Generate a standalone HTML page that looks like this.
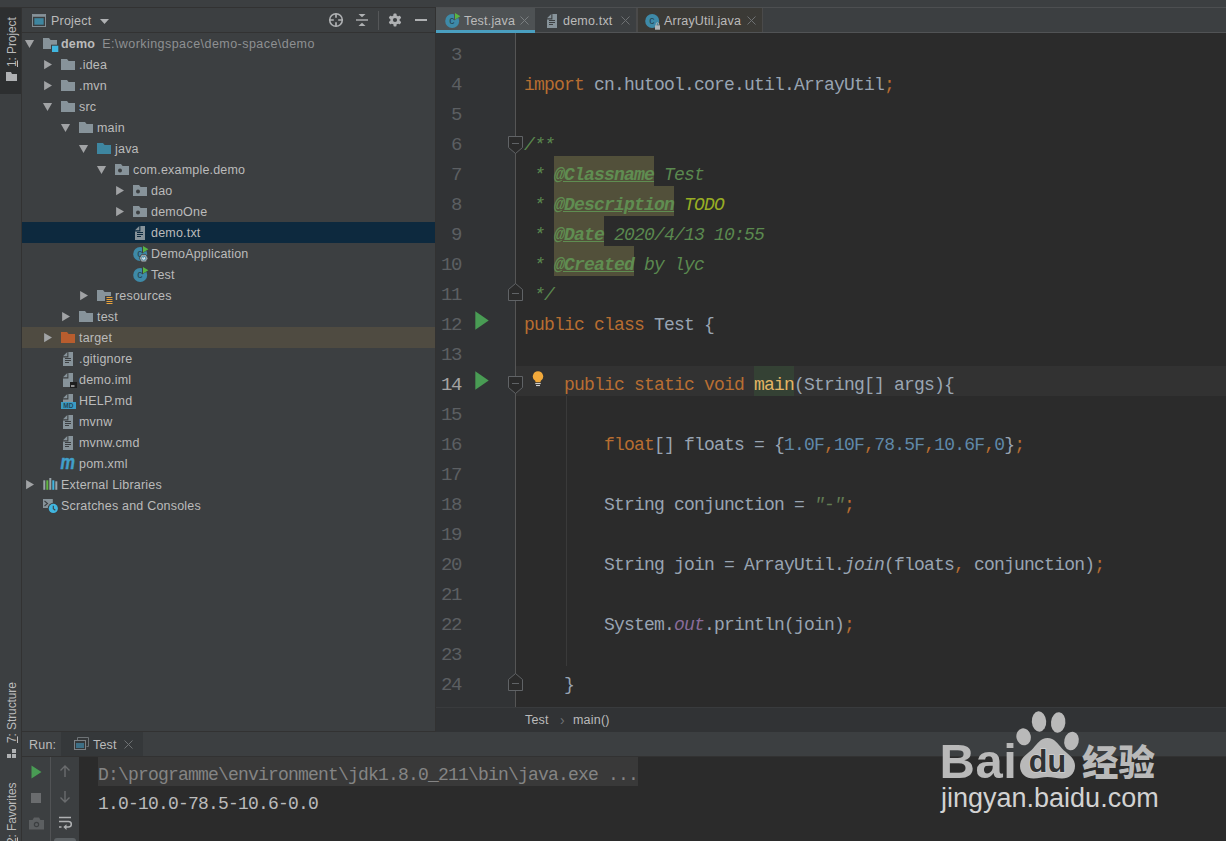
<!DOCTYPE html>
<html><head><meta charset="utf-8"><title>demo</title>
<style>
*{box-sizing:border-box}
html,body{margin:0;padding:0}
body{width:1226px;height:841px;overflow:hidden;position:relative;background:#3c3f41;font-family:"Liberation Sans","Noto Sans CJK SC",sans-serif;font-size:12.5px;letter-spacing:.2px;color:#bbbbbb}
.abs{position:absolute}
#topline{left:0;top:7px;width:1226px;height:1px;background:#323232}
#stripe{left:0;top:8px;width:22px;height:833px;background:#3c3f41;border-right:1px solid #323232}
#stripe .act{position:absolute;left:0;top:0;width:21px;height:86px;background:#2d2f30}
.vt{position:absolute;white-space:nowrap;transform-origin:0 0;transform:rotate(-90deg);font-size:12px;letter-spacing:-.1px;color:#bbbbbb}
#side{left:22px;top:8px;width:414px;height:723px;background:#3c3f41;border-right:1px solid #323232}
#sidehead{left:22px;top:8px;width:413px;height:25px;border-bottom:1px solid #323232}
.row{position:absolute;left:22px;width:413px;height:21px;line-height:21px;white-space:nowrap}
.row.sel{background:#0d293e}
.row.excl{background:#4f4b41}
.row span{position:absolute;top:0}
.row .arw{top:5px;height:11px;line-height:0}
.row .icw{top:3px;height:16px;line-height:0}
.row .lbl{top:1px}
.row b{font-weight:bold;color:#bbbbbb;position:static}
.row .loc{position:static;color:#8e9092;margin-left:7px;letter-spacing:.45px}
.pomm{font-family:"Liberation Sans",sans-serif;font-weight:bold;font-style:italic;font-size:17px;color:#3e9ac4;line-height:14px;position:static!important;display:inline-block;transform:translate(-3px,-3px)}
#tabs{left:436px;top:7px;width:790px;height:26px;background:#3c3f41;border-bottom:1px solid #515355;border-top:1px solid #4d4f51}
.tab{position:absolute;top:8px;height:25px;line-height:26px;white-space:nowrap;color:#bbbbbb}
#editor{left:436px;top:33px;width:790px;height:674px;background:#2b2b2b;overflow:hidden}
#gutter{left:0;top:0;width:80px;height:675px;background:#313335;border-right:1px solid #555555}
.mono{font-family:"Liberation Mono",monospace}
.ln{position:absolute;left:0;width:25px;text-align:right;height:30px;line-height:32px;font-family:"Liberation Mono",monospace;font-size:19px;letter-spacing:-1.4px;color:#5c5f62;transform:translateY(-33px)}
.ln.cur{color:#a4a3a3}
.cl{position:absolute;left:88px;height:30px;line-height:32px;white-space:pre;font-family:"Liberation Mono",monospace;font-size:18px;letter-spacing:-0.8px;color:#a9b7c6;opacity:.87;transform:translateY(-33px)}
.k{color:#cc7832} .dc{color:#629755;font-style:italic} .dt{color:#629755;font-style:italic;font-weight:bold;text-decoration:underline}
.todo{color:#a8c023;font-style:italic} .n{color:#6897bb} .s{color:#6a8759;font-style:italic} .i{font-style:italic} .fld{color:#9876aa;font-style:italic}
.fn{color:#ffc66d}
#curline{left:80px;top:333px;width:710px;height:30px;background:#323232}
#crumbs{left:436px;top:707px;width:790px;height:25px;background:#313335;border-top:1px solid #393b3d;line-height:24px;color:#bbbbbb}
#runhead{left:22px;top:731px;width:1204px;height:26px;background:#3c3f41;border-top:1px solid #323232;border-bottom:1px solid #323232}
#runhead2{left:436px;top:731px;width:790px;height:1px;background:#313335}
#runtab{left:39px;top:0;width:82px;height:24px;background:#35383a}
#runtools{left:22px;top:757px;width:57px;height:84px;background:#3c3f41}
#console{left:79px;top:757px;width:1147px;height:84px;background:#2b2b2b}
.con{position:absolute;left:19px;height:26px;line-height:28px;white-space:pre;font-family:"Liberation Mono",monospace;font-size:18px;letter-spacing:-0.8px}
</style></head><body>
<div class="abs" id="topline"></div>
<div class="abs" id="stripe"><div class="act"></div>
<span class="vt" style="left:5px;top:59px"><u>1</u>: Project</span>
<svg class="abs" style="left:6px;top:64px" width="11" height="9" viewBox="0 0 11 9"><path d="M0 0h5l1 2h5v7H0z" fill="#afb1b3"/></svg>
<span class="vt" style="left:5px;top:735px"><u>7</u>: Structure</span>
<span class="vt" style="left:5px;top:836px"><u>2</u>: Favorites</span>
<svg class="abs" style="left:7px;top:739px" width="12" height="12" viewBox="0 0 12 12"><rect x="0" y="7" width="4" height="4" fill="#afb1b3"/><rect x="5" y="7" width="4" height="4" fill="#afb1b3"/><rect x="5" y="2" width="4" height="4" fill="#afb1b3"/></svg>
</div>
<div class="abs" id="side"></div>
<div class="abs" id="sidehead">
<svg class="abs" style="left:10px;top:6px" width="14" height="13" viewBox="0 0 15 14" preserveAspectRatio="none"><rect x=".5" y=".5" width="14" height="13" fill="#3c3f41" stroke="#87939a"/><rect x="1" y="1" width="13" height="2" fill="#87939a"/><rect x="2.500" y="4.500" width="10" height="7" fill="#3e86a0"/></svg>
<span class="abs" style="left:29px;top:1px;line-height:25px;font-size:12.5px">Project</span>
<svg class="abs" style="left:78px;top:11px" width="9" height="6" viewBox="0 0 9 6"><path d="M0 0h9l-4.500 5z" fill="#afb1b3"/></svg>
<svg class="abs" style="left:306px;top:4px" width="16" height="16" viewBox="0 0 16 16"><circle cx="8" cy="8" r="6.300" fill="none" stroke="#afb1b3" stroke-width="1.600"/><path d="M8 1.500v4.300M8 10.200v4.300M1.500 8h4.300M10.200 8h4.300" stroke="#afb1b3" stroke-width="1.700"/></svg>
<svg class="abs" style="left:332px;top:4px" width="16" height="16" viewBox="0 0 16 16"><path d="M2 8h12" stroke="#afb1b3" stroke-width="1.400"/><path d="M4.500 2h7l-3.500 3.300z" fill="#afb1b3"/><path d="M4.500 14h7l-3.500-3.300z" fill="#afb1b3"/></svg>
<div class="abs" style="left:356px;top:3px;width:1px;height:19px;background:#555759"></div>
<svg class="abs" style="left:365px;top:4px" width="16" height="16" viewBox="0 0 16 16"><g fill="#afb1b3"><circle cx="8" cy="8" r="4.700"/><rect x="6.500" y="1.500" width="3" height="13" rx=".8"/><rect x="6.500" y="1.500" width="3" height="13" rx=".8" transform="rotate(60 8 8)"/><rect x="6.500" y="1.500" width="3" height="13" rx=".8" transform="rotate(120 8 8)"/></g><circle cx="8" cy="8" r="2.100" fill="#3c3f41"/></svg>
<div class="abs" style="left:393px;top:11px;width:12px;height:2px;background:#afb1b3"></div>
</div>
<div class="row " style="top:33px"><span class="arw" style="left:2px"><svg class="ar" width="11" height="11" viewBox="0 0 11 11"><path d="M.9 1.900h9.200l-4.600 8.100z" fill="#a1a3a5"/></svg></span><span class="icw" style="left:21px"><svg class="ic" width="16" height="16" viewBox="0 0 16 16"><path d="M0 2h6l1.6 2H14v9H0z" fill="#87939a"/><rect x="8" y="8.700" width="8" height="8" fill="#3c3f41"/><rect x="9" y="9.700" width="6.300" height="6.300" fill="#40b6e0"/></svg></span><span class="lbl" style="left:39px"><b>demo</b><span class="loc">E:\workingspace\demo-space\demo</span></span></div>
<div class="row " style="top:54px"><span class="arw" style="left:20px"><svg class="ar" width="11" height="11" viewBox="0 0 11 11"><path d="M2.100 1l7.900 4.600-7.900 4.600z" fill="#a1a3a5"/></svg></span><span class="icw" style="left:39px"><svg class="ic" width="16" height="16" viewBox="0 0 16 16"><path d="M0 2h6l1.6 2H14v9H0z" fill="#87939a"/></svg></span><span class="lbl" style="left:57px">.idea</span></div>
<div class="row " style="top:75px"><span class="arw" style="left:20px"><svg class="ar" width="11" height="11" viewBox="0 0 11 11"><path d="M2.100 1l7.900 4.600-7.900 4.600z" fill="#a1a3a5"/></svg></span><span class="icw" style="left:39px"><svg class="ic" width="16" height="16" viewBox="0 0 16 16"><path d="M0 2h6l1.6 2H14v9H0z" fill="#87939a"/></svg></span><span class="lbl" style="left:57px">.mvn</span></div>
<div class="row " style="top:96px"><span class="arw" style="left:20px"><svg class="ar" width="11" height="11" viewBox="0 0 11 11"><path d="M.9 1.900h9.200l-4.600 8.100z" fill="#a1a3a5"/></svg></span><span class="icw" style="left:39px"><svg class="ic" width="16" height="16" viewBox="0 0 16 16"><path d="M0 2h6l1.6 2H14v9H0z" fill="#87939a"/></svg></span><span class="lbl" style="left:57px">src</span></div>
<div class="row " style="top:117px"><span class="arw" style="left:38px"><svg class="ar" width="11" height="11" viewBox="0 0 11 11"><path d="M.9 1.900h9.200l-4.600 8.100z" fill="#a1a3a5"/></svg></span><span class="icw" style="left:57px"><svg class="ic" width="16" height="16" viewBox="0 0 16 16"><path d="M0 2h6l1.6 2H14v9H0z" fill="#87939a"/></svg></span><span class="lbl" style="left:75px">main</span></div>
<div class="row " style="top:138px"><span class="arw" style="left:56px"><svg class="ar" width="11" height="11" viewBox="0 0 11 11"><path d="M.9 1.900h9.200l-4.600 8.100z" fill="#a1a3a5"/></svg></span><span class="icw" style="left:75px"><svg class="ic" width="16" height="16" viewBox="0 0 16 16"><path d="M0 2h6l1.6 2H14v9H0z" fill="#3e86a0"/></svg></span><span class="lbl" style="left:93px">java</span></div>
<div class="row " style="top:159px"><span class="arw" style="left:74px"><svg class="ar" width="11" height="11" viewBox="0 0 11 11"><path d="M.9 1.900h9.200l-4.600 8.100z" fill="#a1a3a5"/></svg></span><span class="icw" style="left:93px"><svg class="ic" width="16" height="16" viewBox="0 0 16 16"><path d="M0 2h6l1.6 2H14v9H0z" fill="#87939a"/><circle cx="5" cy="8.5" r="2" fill="#3c3f41"/></svg></span><span class="lbl" style="left:111px">com.example.demo</span></div>
<div class="row " style="top:180px"><span class="arw" style="left:92px"><svg class="ar" width="11" height="11" viewBox="0 0 11 11"><path d="M2.100 1l7.900 4.600-7.900 4.600z" fill="#a1a3a5"/></svg></span><span class="icw" style="left:111px"><svg class="ic" width="16" height="16" viewBox="0 0 16 16"><path d="M0 2h6l1.6 2H14v9H0z" fill="#87939a"/><circle cx="5" cy="8.5" r="2" fill="#3c3f41"/></svg></span><span class="lbl" style="left:129px">dao</span></div>
<div class="row " style="top:201px"><span class="arw" style="left:92px"><svg class="ar" width="11" height="11" viewBox="0 0 11 11"><path d="M2.100 1l7.900 4.600-7.900 4.600z" fill="#a1a3a5"/></svg></span><span class="icw" style="left:111px"><svg class="ic" width="16" height="16" viewBox="0 0 16 16"><path d="M0 2h6l1.6 2H14v9H0z" fill="#87939a"/><circle cx="5" cy="8.5" r="2" fill="#3c3f41"/></svg></span><span class="lbl" style="left:129px">demoOne</span></div>
<div class="row sel" style="top:222px"><span class="icw" style="left:111px"><svg class="ic" width="16" height="16" viewBox="0 0 16 16"><path d="M7.400 1H12v14H2V6.400h5.400z" fill="#87939a"/><path d="M6.300 1v4.300H2z" fill="#87939a"/><path d="M4 7.5h6M4 9.5h6M4 11.5h4" stroke="#0d293e" stroke-width="1"/></svg></span><span class="lbl" style="left:129px">demo.txt</span></div>
<div class="row " style="top:243px"><span class="icw" style="left:111px"><svg class="ic" width="16" height="16" viewBox="0 0 16 16"><circle cx="7.2" cy="8" r="7" fill="#3e8aa8"/><text x="7" y="11" text-anchor="middle" font-family="Liberation Sans, sans-serif" font-size="10.500" fill="#23424f">c</text><path d="M9 -1v8.500l7-4.200z" fill="#3c3f41"/><path d="M10 0v6.600l5.400-3.300z" fill="#59b543"/><path d="M8.500 8.400h4.400l2.200 3.800-2.200 3.800h-4.400l-2.200-3.800z" fill="#9da4a8" stroke="#3c3f41" stroke-width=".8"/><circle cx="10.700" cy="12.200" r="2" fill="#e8ecee" stroke="#3e8aa8" stroke-width=".9"/><path d="M10.700 10.500v1.800" stroke="#3e8aa8" stroke-width=".9"/></svg></span><span class="lbl" style="left:129px">DemoApplication</span></div>
<div class="row " style="top:264px"><span class="icw" style="left:111px"><svg class="ic" width="16" height="16" viewBox="0 0 16 16"><circle cx="7.2" cy="8" r="7" fill="#3e8aa8"/><text x="7" y="11" text-anchor="middle" font-family="Liberation Sans, sans-serif" font-size="10.500" fill="#23424f">c</text><path d="M9 -1v8.500l7-4.200z" fill="#3c3f41"/><path d="M10 0v6.600l5.400-3.300z" fill="#59b543"/></svg></span><span class="lbl" style="left:129px">Test</span></div>
<div class="row " style="top:285px"><span class="arw" style="left:56px"><svg class="ar" width="11" height="11" viewBox="0 0 11 11"><path d="M2.100 1l7.900 4.600-7.900 4.600z" fill="#a1a3a5"/></svg></span><span class="icw" style="left:75px"><svg class="ic" width="16" height="16" viewBox="0 0 16 16"><path d="M0 2h6l1.6 2H14v9H0z" fill="#87939a"/><rect x="8" y="8" width="8" height="8" fill="#3c3f41"/><path d="M9.500 9.500h6M9.500 11.500h6M9.500 13.500h6M9.500 15.500h6" stroke="#e8a33d" stroke-width="1"/></svg></span><span class="lbl" style="left:93px">resources</span></div>
<div class="row " style="top:306px"><span class="arw" style="left:38px"><svg class="ar" width="11" height="11" viewBox="0 0 11 11"><path d="M2.100 1l7.900 4.600-7.900 4.600z" fill="#a1a3a5"/></svg></span><span class="icw" style="left:57px"><svg class="ic" width="16" height="16" viewBox="0 0 16 16"><path d="M0 2h6l1.6 2H14v9H0z" fill="#87939a"/></svg></span><span class="lbl" style="left:75px">test</span></div>
<div class="row excl" style="top:327px"><span class="arw" style="left:20px"><svg class="ar" width="11" height="11" viewBox="0 0 11 11"><path d="M2.100 1l7.900 4.600-7.900 4.600z" fill="#a1a3a5"/></svg></span><span class="icw" style="left:39px"><svg class="ic" width="16" height="16" viewBox="0 0 16 16"><path d="M0 2h6l1.6 2H14v9H0z" fill="#b85d2e"/></svg></span><span class="lbl" style="left:57px">target</span></div>
<div class="row " style="top:348px"><span class="icw" style="left:39px"><svg class="ic" width="16" height="16" viewBox="0 0 16 16"><path d="M7.400 1H12v14H2V6.400h5.400z" fill="#87939a"/><path d="M6.300 1v4.300H2z" fill="#87939a"/><path d="M4 7.5h6M4 9.5h6M4 11.5h4" stroke="#3c3f41" stroke-width="1"/></svg></span><span class="lbl" style="left:57px">.gitignore</span></div>
<div class="row " style="top:369px"><span class="icw" style="left:39px"><svg class="ic" width="16" height="16" viewBox="0 0 16 16"><path d="M7.400 1H12v14H2V6.400h5.400z" fill="#87939a"/><path d="M6.300 1v4.300H2z" fill="#87939a"/><rect x="9" y="10" width="7" height="6" fill="#1e1e1e"/><rect x="10" y="13.5" width="3.5" height="1" fill="#fff"/></svg></span><span class="lbl" style="left:57px">demo.iml</span></div>
<div class="row " style="top:390px"><span class="icw" style="left:39px"><svg class="ic" width="16" height="16" viewBox="0 0 16 16"><path d="M7.400 1H12v8H2V6.400h5.400z" fill="#87939a"/><path d="M6.300 1v4.300H2z" fill="#87939a"/><rect x="0" y="9" width="15" height="7" fill="#3b9bc4"/><text x="7.500" y="15" text-anchor="middle" font-family="Liberation Sans, sans-serif" font-weight="bold" font-size="6.500" letter-spacing=".3" fill="#24475a">MD</text></svg></span><span class="lbl" style="left:57px">HELP.md</span></div>
<div class="row " style="top:411px"><span class="icw" style="left:39px"><svg class="ic" width="16" height="16" viewBox="0 0 16 16"><path d="M7.400 1H12v14H2V6.400h5.400z" fill="#87939a"/><path d="M6.300 1v4.300H2z" fill="#87939a"/><path d="M4 7.5h6M4 9.5h6M4 11.5h4" stroke="#3c3f41" stroke-width="1"/></svg></span><span class="lbl" style="left:57px">mvnw</span></div>
<div class="row " style="top:432px"><span class="icw" style="left:39px"><svg class="ic" width="16" height="16" viewBox="0 0 16 16"><path d="M7.400 1H12v14H2V6.400h5.400z" fill="#87939a"/><path d="M6.300 1v4.300H2z" fill="#87939a"/><path d="M4 7.5h6M4 9.5h6M4 11.5h4" stroke="#3c3f41" stroke-width="1"/></svg></span><span class="lbl" style="left:57px">mvnw.cmd</span></div>
<div class="row " style="top:453px"><span class="icw" style="left:39px"><svg class="ic" style="overflow:visible" width="16" height="16" viewBox="0 0 16 16"><text x="-.5" y="13.200" transform="scale(.8 1)" font-family="Liberation Sans, sans-serif" font-weight="bold" font-style="italic" font-size="20.300" fill="#419fca" stroke="#419fca" stroke-width=".5">m</text></svg></span><span class="lbl" style="left:57px">pom.xml</span></div>
<div class="row " style="top:474px"><span class="arw" style="left:2px"><svg class="ar" width="11" height="11" viewBox="0 0 11 11"><path d="M2.100 1l7.900 4.600-7.900 4.600z" fill="#a1a3a5"/></svg></span><span class="icw" style="left:21px"><svg class="ic" width="16" height="16" viewBox="0 0 16 16"><rect x=".3" y="3.300" width="2" height="9.500" fill="#9aa4a9"/><rect x="3.300" y="3.300" width="2" height="9.500" fill="#62b543"/><rect x="6.300" y="1" width="2" height="11.800" fill="#9aa4a9"/><rect x="9.300" y="3.300" width="2" height="9.500" fill="#40b6e0"/><rect x="12.300" y="4.300" width="2" height="8.500" fill="#9aa4a9"/></svg></span><span class="lbl" style="left:39px">External Libraries</span></div>
<div class="row " style="top:495px"><span class="icw" style="left:21px"><svg class="ic" width="16" height="16" viewBox="0 0 16 16"><rect x="0" y="1" width="9.800" height="9" fill="#87939a"/><path d="M1.500 3l3 2.500-3 2.500" stroke="#3c3f41" stroke-width="1.100" fill="none"/><circle cx="10.300" cy="10.400" r="5.600" fill="#3c3f41"/><circle cx="10.300" cy="10.400" r="4.600" fill="#40b6e0"/><path d="M10.300 7.700v3l2 1.500" stroke="#3c3f41" stroke-width="1.100" fill="none"/></svg></span><span class="lbl" style="left:39px">Scratches and Consoles</span></div>
<div class="abs" id="tabs"></div>
<div class="tab" style="left:436px;width:99px;background:#4e5254;border-bottom:3px solid #4a9fc0;height:25px"></div>
<div class="tab" style="left:464px">Test.java</div>
<div class="tab" style="left:563px">demo.txt</div>
<div class="tab" style="left:637px;width:126px;background:#3b3a36;border-left:1px solid #4a4a4a;border-right:1px solid #4a4a4a;height:24px"></div>
<div class="abs" style="left:636px;top:8px;width:1px;height:24px;background:#4a4a4a"></div>
<div class="tab" style="left:664px">ArrayUtil.java</div>
<svg class="abs" style="left:520px;top:16px" width="9" height="9" viewBox="0 0 9 9"><path d="M.5.5l8 8M8.500.5l-8 8" stroke="#7a7e80" stroke-width="1"/></svg>
<svg class="abs" style="left:621px;top:16px" width="9" height="9" viewBox="0 0 9 9"><path d="M.5.5l8 8M8.500.5l-8 8" stroke="#6e7173" stroke-width="1"/></svg>
<svg class="abs" style="left:747px;top:16px" width="9" height="9" viewBox="0 0 9 9"><path d="M.5.5l8 8M8.500.5l-8 8" stroke="#6e7173" stroke-width="1"/></svg>
<div class="abs" style="left:445px;top:13px;line-height:0"><svg class="ic" width="16" height="16" viewBox="0 0 16 16"><circle cx="7.2" cy="8" r="7" fill="#3e8aa8"/><text x="7" y="11" text-anchor="middle" font-family="Liberation Sans, sans-serif" font-size="10.500" fill="#23424f">c</text><path d="M9 -1v8.500l7-4.200z" fill="#4e5254"/><path d="M10 0v6.600l5.400-3.300z" fill="#59b543"/></svg></div>
<div class="abs" style="left:545px;top:12.500px;line-height:0"><svg class="ic" width="16" height="16" viewBox="0 0 16 16"><path d="M7.400 1H12v14H2V6.400h5.400z" fill="#87939a"/><path d="M6.300 1v4.300H2z" fill="#87939a"/><path d="M4 7.5h6M4 9.5h6M4 11.5h4" stroke="#3c3f41" stroke-width="1"/></svg></div>
<div class="abs" style="left:645px;top:13px;line-height:0"><svg class="ic" style="overflow:visible" width="16" height="16" viewBox="0 0 16 16"><circle cx="7.2" cy="8" r="7" fill="#3e8aa8"/><text x="7" y="11" text-anchor="middle" font-family="Liberation Sans, sans-serif" font-size="10.500" fill="#23424f">c</text><rect x="10" y="12.300" width="5" height="4.400" fill="#b0b5b8"/><path d="M11.200 12.300v-1.300a1.300 1.300 0 0 1 2.600 0v1.300" stroke="#b0b5b8" stroke-width=".9" fill="none"/></svg></div>
<div class="abs" id="editor">
<div class="abs" id="curline"></div>
<div class="abs" id="gutter"></div>
<div class="abs" style="left:118px;top:123px;width:100px;height:30px;background:#52503a"></div>
<div class="abs" style="left:118px;top:153px;width:120px;height:30px;background:#52503a"></div>
<div class="abs" style="left:118px;top:183px;width:50px;height:30px;background:#52503a"></div>
<div class="abs" style="left:118px;top:213px;width:80px;height:30px;background:#52503a"></div>
<div class="abs" style="left:318px;top:333px;width:40px;height:30px;background:#344134"></div>
<div class="abs" style="left:130px;top:363px;width:1px;height:270px;background:#3a3a3a"></div>
<div class="ln" style="top:39px">3</div>
<div class="ln" style="top:69px">4</div>
<div class="ln" style="top:99px">5</div>
<div class="ln" style="top:129px">6</div>
<div class="ln" style="top:159px">7</div>
<div class="ln" style="top:189px">8</div>
<div class="ln" style="top:219px">9</div>
<div class="ln" style="top:249px">10</div>
<div class="ln" style="top:279px">11</div>
<div class="ln" style="top:309px">12</div>
<div class="ln" style="top:339px">13</div>
<div class="ln cur" style="top:369px">14</div>
<div class="ln" style="top:399px">15</div>
<div class="ln" style="top:429px">16</div>
<div class="ln" style="top:459px">17</div>
<div class="ln" style="top:489px">18</div>
<div class="ln" style="top:519px">19</div>
<div class="ln" style="top:549px">20</div>
<div class="ln" style="top:579px">21</div>
<div class="ln" style="top:609px">22</div>
<div class="ln" style="top:639px">23</div>
<div class="ln" style="top:669px">24</div>
<div class="cl" style="top:69px"><span class="k">import</span> cn.hutool.core.util.ArrayUtil<span class="k">;</span></div>
<div class="cl" style="top:129px"><span class="dc">/**</span></div>
<div class="cl" style="top:159px"><span class="dc"> * </span><span class="dt">@Classname</span><span class="dc"> Test</span></div>
<div class="cl" style="top:189px"><span class="dc"> * </span><span class="dt">@Description</span> <span class="todo">TODO</span></div>
<div class="cl" style="top:219px"><span class="dc"> * </span><span class="dt">@Date</span><span class="dc"> 2020/4/13 10:55</span></div>
<div class="cl" style="top:249px"><span class="dc"> * </span><span class="dt">@Created</span><span class="dc"> by lyc</span></div>
<div class="cl" style="top:279px"><span class="dc"> */</span></div>
<div class="cl" style="top:309px"><span class="k">public class</span> Test {</div>
<div class="cl" style="top:369px">    <span class="k">public static void</span> <span class="fn">main</span>(String[] args){</div>
<div class="cl" style="top:429px">        <span class="k">float</span>[] floats = {<span class="n">1.0F</span><span class="k">,</span><span class="n">10F</span><span class="k">,</span><span class="n">78.5F</span><span class="k">,</span><span class="n">10.6F</span><span class="k">,</span><span class="n">0</span>}<span class="k">;</span></div>
<div class="cl" style="top:489px">        String conjunction = <span class="s">"-"</span><span class="k">;</span></div>
<div class="cl" style="top:549px">        String join = ArrayUtil.<span class="i">join</span>(floats<span class="k">,</span> conjunction)<span class="k">;</span></div>
<div class="cl" style="top:609px">        System.<span class="fld">out</span>.println(join)<span class="k">;</span></div>
<div class="cl" style="top:669px">    }</div>
<div class="abs" style="left:39px;top:278px;line-height:0"><svg width="14" height="19" viewBox="0 0 14 19"><path d="M0.3 0.3l13.4 9.2-13.4 9.2z" fill="#499c54"/></svg></div>
<div class="abs" style="left:39px;top:338px;line-height:0"><svg width="14" height="19" viewBox="0 0 14 19"><path d="M0.3 0.3l13.4 9.2-13.4 9.2z" fill="#499c54"/></svg></div>
<div class="abs" style="left:72px;top:103px;line-height:0"><svg width="15" height="18" viewBox="0 0 15 18"><path d="M0.5 0.5h14v11l-7 6-7-6z" fill="#2b2b2b" stroke="#606366"/><path d="M4 7.5h7" stroke="#606366"/></svg></div>
<div class="abs" style="left:72px;top:250px;line-height:0"><svg width="15" height="18" viewBox="0 0 15 18"><path d="M0.5 17.5h14v-11l-7-6-7 6z" fill="#2b2b2b" stroke="#606366"/><path d="M4 10.5h7" stroke="#606366"/></svg></div>
<div class="abs" style="left:72px;top:343px;line-height:0"><svg width="15" height="18" viewBox="0 0 15 18"><path d="M0.5 0.5h14v11l-7 6-7-6z" fill="#2b2b2b" stroke="#606366"/><path d="M4 7.5h7" stroke="#606366"/></svg></div>
<div class="abs" style="left:72px;top:640px;line-height:0"><svg width="15" height="18" viewBox="0 0 15 18"><path d="M0.5 17.5h14v-11l-7-6-7 6z" fill="#2b2b2b" stroke="#606366"/><path d="M4 10.5h7" stroke="#606366"/></svg></div>
<div class="abs" style="left:96px;top:338px;line-height:0"><svg width="12" height="16" viewBox="0 0 12 16"><path d="M6 0.3a5.200 5.200 0 0 0-2.600 9.700V11.300h5.200V10A5.200 5.200 0 0 0 6 0.300z" fill="#f2a93b"/><rect x="3.300" y="12" width="5.400" height="1.100" fill="#d0d0d0"/><rect x="4" y="14" width="4" height="1.100" fill="#d0d0d0"/></svg></div>
</div>
<div class="abs" id="crumbs"><span class="abs" style="left:89px">Test</span><span class="abs" style="left:124px;color:#6e7274;font-size:14px">›</span><span class="abs" style="left:137px">main()</span></div>
<div class="abs" id="runhead"><div class="abs" id="runtab"></div><span class="abs" style="left:7px;line-height:26px">Run:</span><span class="abs" style="left:71px;line-height:26px">Test</span>
<svg class="abs" style="left:52px;top:5px" width="15" height="14" viewBox="0 0 15 14"><path d="M3.500 3.500v-3h11v9h-2" fill="none" stroke="#6e7376"/><rect x=".5" y="3.500" width="11" height="9" fill="#35383a" stroke="#7d8286"/><rect x="2" y="6" width="8" height="5" fill="#3d6f86"/></svg>
<svg class="abs" style="left:102px;top:8px" width="9" height="9" viewBox="0 0 9 9"><path d="M.5.5l8 8M8.500.5l-8 8" stroke="#6e7173" stroke-width="1"/></svg>
</div>
<div class="abs" id="runhead2"></div>
<div class="abs" id="runtools">
<div class="abs" style="left:28px;top:0;width:1px;height:84px;background:#515355"></div>
<svg class="abs" style="left:9px;top:8px" width="11" height="14" viewBox="0 0 11 14"><path d="M.5.5l10 6.500-10 6.500z" fill="#499c54"/></svg>
<div class="abs" style="left:9px;top:36px;width:10px;height:10px;background:#6a6c6e"></div>
<svg class="abs" style="left:7px;top:60px" width="15" height="13" viewBox="0 0 15 13"><path d="M0 3h3.500l1.500-2.500h5l1.500 2.500h3.500v9.500h-15z" fill="#5c5f61"/><circle cx="7.500" cy="7.500" r="2.700" fill="#3c3f41"/><circle cx="7.500" cy="7.500" r="1.500" fill="#5c5f61"/></svg>
<svg class="abs" style="left:37px;top:7px" width="12" height="14" viewBox="0 0 12 14"><path d="M6 13v-11M1.500 6.500l4.500-4.500 4.500 4.500" stroke="#6a6c6e" stroke-width="1.400" fill="none"/></svg>
<svg class="abs" style="left:37px;top:33px" width="12" height="14" viewBox="0 0 12 14"><path d="M6 1v11M1.500 7.500l4.500 4.500 4.500-4.500" stroke="#6a6c6e" stroke-width="1.400" fill="none"/></svg>
<svg class="abs" style="left:36px;top:59px" width="14" height="15" viewBox="0 0 14 15"><path d="M1 1.500h12M1 5.500h9.500a2.800 2.800 0 0 1 0 5.600h-3.500M1 11h2.500" stroke="#afb1b3" stroke-width="1.500" fill="none"/><path d="M8.500 8.300v5.600l-3.200-2.800z" fill="#afb1b3"/></svg>
<div class="abs" style="left:32px;top:81px;width:22px;height:10px;border-radius:3px;background:#5c6164"></div>
</div>
<div class="abs" id="console">
<div class="abs" style="left:19px;top:0px;width:540px;height:29px;background:#393939"></div>
<div class="con" style="top:4px;color:#848484">D:\programme\environment\jdk1.8.0_211\bin\java.exe ...</div>
<div class="con" style="top:33px;color:#bbbbbb">1.0-10.0-78.5-10.6-0.0</div>
</div>
<div class="abs" id="wm" style="left:0;top:0;width:1226px;height:841px;pointer-events:none">
<span class="abs" style="left:939.500px;top:736.500px;font:bold 49px/49px 'Liberation Sans',sans-serif;letter-spacing:.5px;color:#b9b9b9">Bai</span>
<svg class="abs" style="left:1010px;top:705px" width="76" height="80" viewBox="0 0 76 80">
<g fill="#b9b9b9">
<ellipse cx="13.600" cy="31.800" rx="7.200" ry="8.600" transform="rotate(-12 13.600 31.800)"/>
<ellipse cx="29" cy="16.500" rx="7.200" ry="10.200" transform="rotate(-4 29 16.500)"/>
<ellipse cx="48.200" cy="17.500" rx="7.200" ry="10.200" transform="rotate(6 48.200 17.500)"/>
<ellipse cx="61.500" cy="36" rx="7.200" ry="9.400" transform="rotate(14 61.500 36)"/>
<path d="M37.500 33c7 0 10 5.500 14.500 10.500 4.500 5 13 8.500 13 17.500 0 8-6 12.500-13 12.500-5 0-9.500-1.500-14.500-1.500s-9 1.500-14 1.500c-7.500 0-13.500-4.500-13.500-12.500 0-9 8.500-12.500 13-17.500 4.500-5 7.500-10.500 14.500-10.500z"/>
</g>
<text x="37.500" y="66.500" text-anchor="middle" font-family="Liberation Sans, sans-serif" font-weight="bold" font-size="30.500" letter-spacing="0" fill="#303234" stroke="#cfcfcf" stroke-width="1.600" paint-order="stroke">du</text>
</svg>
<span class="abs" style="left:1082px;top:741.500px;font:900 36.500px/44px 'Liberation Sans','Noto Sans CJK SC',sans-serif;letter-spacing:0;color:#b9b9b9">经验</span>
<span class="abs" style="left:941px;top:782px;font:27px/32px 'Liberation Sans',sans-serif;letter-spacing:0;color:#d2d2d2">jingyan.baidu.com</span>
</div>
</body></html>
